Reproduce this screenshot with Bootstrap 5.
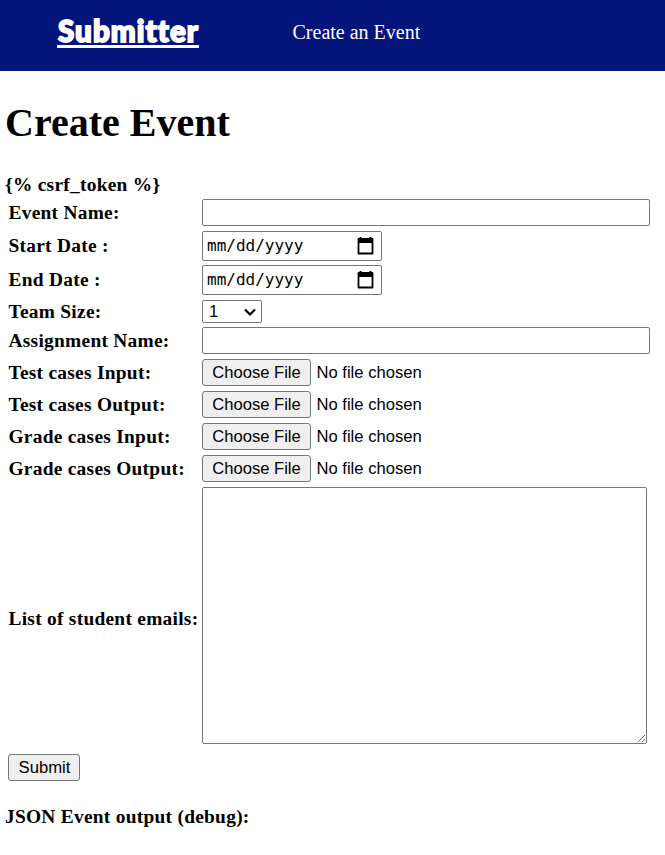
<!DOCTYPE html>
<html lang="en">
<head>
<meta charset="utf-8">
<meta name="viewport" content="width=device-width, initial-scale=1">
<title>Create Event</title>
<link href="https://cdn.jsdelivr.net/npm/bootstrap@5.3.0/dist/css/bootstrap.min.css" rel="stylesheet">
<style>
body{font:20px/23px "Liberation Serif",serif;color:#000;background:#fff}
.topbar{height:71px;background:#03157b;padding:0 0 7px 57px}
.brand{font:900 29.5px/27px Lato,sans-serif;letter-spacing:1.1px;color:#fff;-webkit-text-stroke:1.8px #fff;paint-order:stroke fill;width:142px;height:31px;border-bottom:3px solid #fff;white-space:nowrap;text-decoration:none;padding-left:1px}
.brand:hover{color:#fff}
.toplink{color:#fff;text-decoration:none;margin-left:93.5px}
.page-title{font-size:40px;line-height:46px;font-weight:700;margin:29px 0 27px}
.main-area{padding-left:5px}
.bold-text,.field>label{font-size:19.4px;letter-spacing:.27px;font-weight:700}
.field{padding-left:3px}
.field>label{width:194px;flex:none;white-space:nowrap;padding:0 0 1px .5px}
.ctl{font:16.667px/19px "Liberation Sans",sans-serif;color:#000;background:#fff;border:1px solid #767676;border-radius:2px}
.text-ctl{width:448px;height:27px}
.date-ctl{width:180px;height:30px;padding:0 7px 0 4px;font:16px/28px "DejaVu Sans Mono",monospace}
.size-ctl{width:60px;height:23px;padding:0 4px 0 6px}
.file-ctl{font:16.6px/19px "Liberation Sans",sans-serif;height:27px;width:320px}
.file-ctl::file-selector-button{width:109px;height:27px;margin:0 5.5px 0 0;padding:0;border:1px solid #767676;border-radius:3px;background:#efefef;color:#000;-webkit-appearance:none;appearance:none}
.area-ctl{width:445px;height:257px;resize:both}
.send{width:72px;height:27px;background:#efefef;border-radius:3px;margin:10px 0 0 3px;padding:0 0 0 1px}
.fields{margin-top:3px}
.r-date,.r-assign{margin-top:4px}
.r-name+.r-date,.r-size,.r-file,.r-area{margin-top:5px}
.r-size{height:23px}
.r-area>label{padding-top:7px}
.debug{margin-top:24px}
</style>
<script src="https://cdn.jsdelivr.net/npm/bootstrap@5.3.0/dist/js/bootstrap.bundle.min.js"></script>
</head>
<body>
<nav class="topbar d-flex align-items-center">
  <a class="brand" href="#">Submitter</a>
  <a class="toplink" href="#">Create an Event</a>
</nav>
<main class="main-area">
  <h1 class="page-title">Create Event</h1>
  <form>
    <div class="bold-text">{% csrf_token %}</div>
    <div class="fields d-flex flex-column">
      <div class="field d-flex align-items-center r-name"><label for="ev">Event Name:</label><input id="ev" class="ctl text-ctl" type="text"></div>
      <div class="field d-flex align-items-center r-date"><label>Start Date :</label><div class="ctl date-ctl d-flex align-items-center justify-content-between"><span>mm/dd/yyyy</span><svg width="17" height="18" viewBox="0 0 17 18"><path d="M3.5 0v3M13.5 0v3" stroke="#000" stroke-width="2"/><path d="M1.5 2h14v14.5h-14z" fill="none" stroke="#000" stroke-width="1.8" stroke-linejoin="round"/><path d="M1 2h15v4H1z"/></svg></div></div>
      <div class="field d-flex align-items-center r-date"><label>End Date :</label><div class="ctl date-ctl d-flex align-items-center justify-content-between"><span>mm/dd/yyyy</span><svg width="17" height="18" viewBox="0 0 17 18"><path d="M3.5 0v3M13.5 0v3" stroke="#000" stroke-width="2"/><path d="M1.5 2h14v14.5h-14z" fill="none" stroke="#000" stroke-width="1.8" stroke-linejoin="round"/><path d="M1 2h15v4H1z"/></svg></div></div>
      <div class="field d-flex align-items-center r-size"><label>Team Size:</label><div class="ctl size-ctl d-flex align-items-center justify-content-between"><span>1</span><svg width="14" height="10" viewBox="0 0 14 10"><path d="M2 2.5l5 5 5-5" fill="none" stroke="#000" stroke-width="2.2"/></svg></div></div>
      <div class="field d-flex align-items-center r-assign"><label for="as">Assignment Name:</label><input id="as" class="ctl text-ctl" type="text"></div>
      <div class="field d-flex align-items-center r-file"><label for="f1">Test cases Input:</label><input id="f1" class="file-ctl" type="file"></div>
      <div class="field d-flex align-items-center r-file"><label for="f2">Test cases Output:</label><input id="f2" class="file-ctl" type="file"></div>
      <div class="field d-flex align-items-center r-file"><label for="f3">Grade cases Input:</label><input id="f3" class="file-ctl" type="file"></div>
      <div class="field d-flex align-items-center r-file"><label for="f4">Grade cases Output:</label><input id="f4" class="file-ctl" type="file"></div>
      <div class="field d-flex align-items-center r-area"><label for="em">List of student emails:</label><textarea id="em" class="ctl area-ctl"></textarea></div>
    </div>
    <button class="ctl send d-block" type="button">Submit</button>
  </form>
  <div class="bold-text debug">JSON Event output (debug):</div>
</main>
</body>
</html>
